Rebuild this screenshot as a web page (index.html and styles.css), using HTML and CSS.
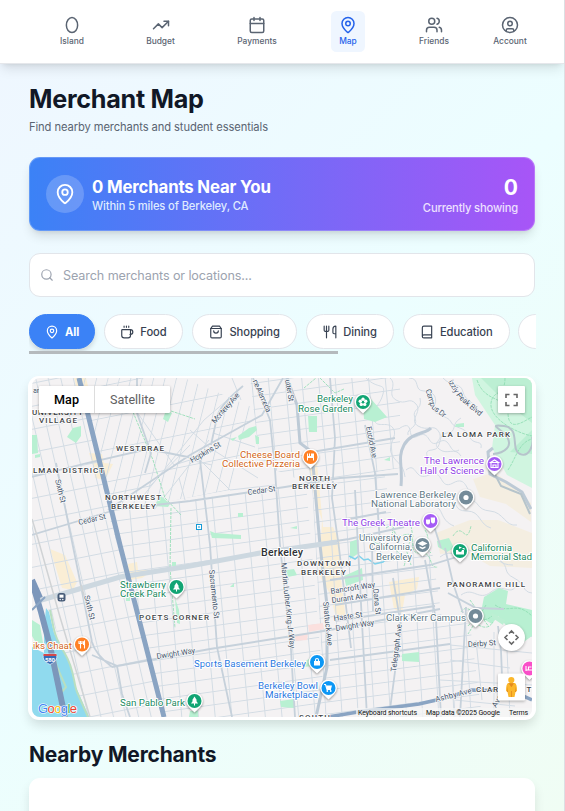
FILE: index.html
```html
<!DOCTYPE html>
<html lang="en">
<head>
<meta charset="utf-8">
<title>Merchant Map</title>
<link rel="stylesheet" href="styles.css">
</head>
<body>
<svg width="0" height="0" class="defs">
  <defs>
    <symbol id="pin" viewBox="0 0 24 24"><path d="M20 10c0 5-5.5 10.2-7.4 11.8a1 1 0 0 1-1.2 0C9.5 20.200 4 15 4 10a8 8 0 0 1 16 0"/><circle cx="12" cy="10" r="3"/></symbol>
  </defs>
</svg>
<div class="page">
  <nav class="nav">
    <a class="item w-island"><svg class="ico" viewBox="0 0 24 24"><path d="M12 2c4 0 7.500 4.500 7.500 10.200S16 22 12 22s-7.500-4.100-7.500-9.800S8 2 12 2z"/></svg><span>Island</span></a>
    <a class="item w-budget"><svg class="ico" viewBox="0 0 24 24"><path d="M22 7l-8.500 8.500-5-5L2 17"/><path d="M16 7h6v6"/></svg><span>Budget</span></a>
    <a class="item w-payments"><svg class="ico" viewBox="0 0 24 24"><path d="M8 2v4M16 2v4M3 10h18"/><rect x="3" y="4" width="18" height="18" rx="2"/></svg><span>Payments</span></a>
    <a class="item w-map active"><svg class="ico"><use href="#pin"/></svg><span>Map</span></a>
    <a class="item w-friends"><svg class="ico" viewBox="0 0 24 24"><path d="M16 21v-2a4 4 0 0 0-4-4H6a4 4 0 0 0-4 4v2"/><circle cx="9" cy="7" r="4"/><path d="M22 21v-2a4 4 0 0 0-3-3.870M16 3.130a4 4 0 0 1 0 7.750"/></svg><span>Friends</span></a>
    <a class="item w-account"><svg class="ico" viewBox="0 0 24 24"><circle cx="12" cy="12" r="10"/><circle cx="12" cy="10" r="3"/><path d="M7 20.600V19a2 2 0 0 1 2-2h6a2 2 0 0 1 2 2v1.600"/></svg><span>Account</span></a>
  </nav>
  <main class="content">
    <h1>Merchant Map</h1>
    <p class="sub">Find nearby merchants and student essentials</p>
    <section class="hero">
      <div class="bubble"><svg class="ico"><use href="#pin"/></svg></div>
      <div class="hero-main"><div class="hero-title">0 Merchants Near You</div><div class="hero-sub">Within 5 miles of Berkeley, CA</div></div>
      <div class="hero-side"><div class="count">0</div><div class="showing">Currently showing</div></div>
    </section>
    <div class="search"><svg class="ico" viewBox="0 0 24 24"><circle cx="11" cy="11" r="8"/><path d="M21 21l-4.300-4.300"/></svg><span>Search merchants or locations...</span></div>
    <div class="chips">
      <div class="chip c-all"><svg class="ico"><use href="#pin"/></svg><span>All</span></div>
      <div class="chip c-food"><svg class="ico" viewBox="0 0 24 24"><path d="M7 2v2M11 2v2M15 2v2M17 8a1 1 0 0 1 1 1v9a4 4 0 0 1-4 4H7a4 4 0 0 1-4-4V9a1 1 0 0 1 1-1h14a4 4 0 1 1 0 8h-1"/></svg><span>Food</span></div>
      <div class="chip c-shop"><svg class="ico" viewBox="0 0 24 24"><path d="M6 2L3 6v14a2 2 0 0 0 2 2h14a2 2 0 0 0 2-2V6l-3-4z"/><path d="M3 6h18M16 10a4 4 0 0 1-8 0"/></svg><span>Shopping</span></div>
      <div class="chip c-dine"><svg class="ico" viewBox="0 0 24 24"><path d="M2 2v7c0 1.100.9 2 2 2h4a2 2 0 0 0 2-2V2M6 2v20M22 15V2a5 5 0 0 0-5 5v6c0 1.100.9 2 2 2zM22 15v7"/></svg><span>Dining</span></div>
      <div class="chip c-edu"><svg class="ico" viewBox="0 0 24 24"><path d="M4 19.500v-15A2.500 2.500 0 0 1 6.500 2H20v20H6.500a2.500 2.500 0 0 1 0-5H20"/></svg><span>Education</span></div>
      <div class="chip c-more"></div>
    </div>
    <div class="thumb"></div>
    <section class="mapcard">
      <svg class="map" viewBox="32 378 500 339">
        <defs>
          <pattern id="gw" width="12" height="22" patternUnits="userSpaceOnUse" patternTransform="matrix(1 -.2 .23 1 36 382)"><path class="mn" d="M0 .5H12M.5 0V22"/></pattern>
          <pattern id="gc" width="16.500" height="13" patternUnits="userSpaceOnUse" patternTransform="matrix(1 -.14 .09 1 202 390)"><path class="mn" d="M0 .5H16.500M.5 0V13"/></pattern>
          <pattern id="gn" width="12" height="34" patternUnits="userSpaceOnUse" patternTransform="matrix(1 -.2 -.25 1 130 380)"><path class="mn" d="M0 .5H12M.5 0V34"/></pattern>
          <pattern id="gs" width="16" height="12" patternUnits="userSpaceOnUse" patternTransform="matrix(1 -.13 .06 1 300 560)"><path class="mn" d="M0 .5H16M.5 0V12"/></pattern>
        </defs>
        <rect class="land" x="32" y="378" width="500" height="339"/>
        <!-- commercial areas -->
        <g class="sand">
          <path d="M74 378h12l2 8H76zM89 453l13 1 2 9 9 1-8 16-10-2-2-13zM50 549l15 6 12 27-4 8-11-2zM128 564l9-2 1 8 16 0-12 8-12 2zM306 452h10l7 75h10l7 15 0 28 6 50-10-3-7-25-10-17 3-55-7-20zM389 582l30-5-2 12-12 6-3 18-8-4z"/>
        </g>
        <path class="tan" d="M473 479l22-7 22 18 14 13v19l-25-18-26-7zM436 533l34-13 28 0 34 13v35l-42-2-24-14-26 2z"/>
        <!-- blocks -->
        <path fill="url(#gw)" d="M32 378h47l85 339H86L56 630 32 570z"/>
        <path fill="url(#gn)" d="M81 378h103l70 30-24 82-122 22z"/>
        <path fill="url(#gc)" d="M108 512l198-29 20 234H165zM250 378h150v90l-90 16-50-20z"/>
        <path fill="url(#gs)" d="M312 483l72-12 10 60 38 20 10 68 28 5 12 93H325z"/>
        <path class="mn" d="M132 405l42 60 16-5 22 5M144 495l60-75 35-30M154 510l55-70M200 460l30 30 45-5M190 430l20 18 48 30M213 433l42 14M105 495l45-9 40-41M232 378l9 22M185 500l-6-22"/>
        <path class="mn" d="M366 378c12 12 20 4 17 16s-10 12-9 24 13 2 19 10-7 17-1 27 11 8 13 22M390 378c8 7-4 16 6 22s13-4 20 4-8 16 2 22 16-3 21 6-8 10 0 17 16-3 22 7M409 378c12 0 4 13 15 13s14 8 10 16 14 8 17 15 14 4 18 14 14 3 12 12M443 378c8 9 18 4 20 14s14 10 17 22M400 428c16-10 5 15 18 8s9 13 21 6 10 14 20 8M406 470c11-9 8 12 23 5s10 16 24 8 13 10 18 7M420 398c3 13-9 10-5 20s-9 10-7 17M461 418c-11 6-3 14-14 15s-3 16-15 17 1 10-6 13M447 498c13 5 6 13 20 13s12 14 24 17M386 494c13-5 11 8 25 3s13 10 23 10 5 13 20 19M470 500c9 0 6 10 20 11s15 16 27 14M440 557c10-8 13 0 19-5s15 0 28 3 12 10 26 10M461 595c13-9 17 7 30-3s19 5 26-7M500 560c10 8 2 12 14 18s8 14 18 15M486 605c10 13 17 6 26 19s13 4 20 13"/>
        <path class="mn" d="M450 627l4 90M476 640l6 60M506 627l4 90M450 660l60 8M440 680l92 5M466 610l65 2M494 632v85M450 645l82 8M455 700l60 6"/>
        <!-- parks -->
        <g class="park">
          <path class="hill" d="M472 378l3 17 20 30-3 23 15 27 25 13V378z"/>
          <path class="deep" d="M481 378l20 20 31 25v-45zM510 452l22-22v24z"/>
          <path d="M363 405l8-6 16 18-12 5-11-3zM73 428l8-2v10l-5 7-9-6zM32 435l5 0 1 18-6 1zM35 455l5-1v3l-5 1zM166 410l6 3-4 9-5-3zM161 496l9 8-2 3-14-1zM238 436l11-8 7-2 1 4-8 7-10 3zM230 439l7-2-4 4zM308 416h9v16h-8zM255 435l4 2v7h-3zM456 424l8-1v4h-9zM384 460l6-3v4zM210 531l5 2 26 2 0 4-29-1zM238 513h5v4h-5zM290 528l7-2v3zM286 570l8-1 3 6-9 2zM344 576l18-8 1 12-17 6zM350 542l8-3 1 14-9 6zM230 587l4-4v4zM484 597l15-9 9 3-2 13 26 6v26l-14 10-8-16-12-14-6 8-12-7zM402 654l17-2v10l-17-1zM294 668l10-6 10-6-1 10zM280 701l14-2v9l-13-1zM190 711h8v6h-9zM172 562h4v4h-4zM126 597h4v4h-4zM175 598l4 12 1 14-3-1z"/>
          <path d="M437 541l12-3 5 10-7 4-9-5zM32 620l8 5 4 24-5-1-7-12z"/>
        </g>
        <path class="deep" d="M492 613l13 7-2 5-12-8z"/>
        <!-- bay -->
        <path class="bay" d="M46 608l3 4 5 21 15 28 6 24 14 32H32v-70l12 6 0-25z"/>
        <path class="shore" d="M50 610c4 18 3 24 14 42s9 30 13 40l11 25M52 650l5 17 9 20-5 6"/>
        <path class="creek" d="M349 556l6 3 4-3 5 4 4-1 7 5 8-2 5-5 5-1"/>
        <path class="clinic" d="M308 625l15-2 1 6-15 3zM295 635l13-2-1 7-13 1z"/>
        <!-- trails -->
        <g class="trail">
          <path d="M133 412l20 48 12 38 16 17M171 508l-1 60 5 60M477 380c8 24 30 15 31 34s16 7 24 3M505 378c0 19-12 11-14 25s22 29 41 33M508 470c8-12 11-28 24-31M386 528c14-9 1 12 18 7s1 19 16 18 7 16 18 14M393 528c-3 13 8 9 4 18s12 8 7 20M411 526l2 11-7 12 5 16M425 530c8 13-5 13 6 23M366 540c8-5 8 8 18 3M453 536c10-16 13 12 18-10M461 612c10-14 15 18 31 4M468 626c6-10 16 10 25-4M470 600l19 27M486 605l-18 29M495 605c15 10 20-5 37 11M171 411l24 8M304 388l12-10M320 378l15 15 9-4"/>
        </g>
        <!-- arterials -->
        <g class="med">
          <path d="M32 477l55-14 61-14 50 10M112 510l78-9 95-14 55-9 58-4M32 535l73-22 10-3M56 463l22 108 14 71q3 12 20 25M108 510l82-55 72-40 21-37M243 386q-23 19-26 31l-6 28M137 378v35l14 40-6 20M200 460l10 85 7 102 15 70M253 378l17 42 5 50 5 75 11 105 4 67M330 378l5 60-3 60 7 50 12 100M365 425l10 48 5 70M312 452l83-14M112 667l98-18 120-19 110-21M303 546l46-7 55-12M330 580l100-15 30-9M335 605l105-17M335 621l100-15M92 655l25 11 5 28 8 23M355 490l12 227M393 578l8 48-12 91M425 560l11 60 5 97M445 548l8 35 10 30M448 593l28 15 28 1M344 520l42-8M372 540l1 71M460 717l6-110M330 660l120-16M441 548l-8-25M498 626l3 25 1 25"/>
        </g>
        <g class="major">
          <path d="M287 378l10 27 3 38 12 9 4 48 4 45 7 60v62l-11 50M401 486c2-20-4-28 3-41s22-11 27-17M493 448l-5 4 2 22 16 8 16 10 9 17"/>
        </g>
        <path class="ave" d="M38 601l82-24 70-11 70-13 77-11"/>
        <path class="rail" d="M32 519l6 20 22 78 18 60 12 40M81 585l9 30"/>
        <path class="ring" d="M493 454c12-1 20-8 14-17s-20-13-3-11 6 24 16 28 14-11 12-17M490 465l11 21 20 8 9 20"/>
        <path class="hwy" d="M79 378l41 167 44 172"/>
        <path class="hwy wide" d="M32 582l9 30 9 34 15 71M32 580l8 18"/>
        <path class="hwy ramp" d="M32 610l13-13"/>
        <path class="hwy ashby" d="M328 717l30-5 61-8 22-5 31-9 40 1 20 9"/>
        <!-- street names -->
        <g class="st">
          <text transform="translate(215 424) rotate(-49)" textLength="38">Monterey Ave</text>
          <text transform="translate(192 463) rotate(-30)" textLength="34">Hopkins St</text>
          <text transform="translate(252.500 381) rotate(66)" textLength="35">ne Alameda</text>
          <text transform="translate(285 380) rotate(80)" textLength="22">utter St</text>
          <text transform="translate(248 495) rotate(-8)" textLength="28">Cedar St</text>
          <text transform="translate(79 525) rotate(-13)" textLength="28">Cedar St</text>
          <text transform="translate(55 480) rotate(76)" textLength="24">Sixth St</text>
          <text transform="translate(84 596) rotate(76)" textLength="25">Sixth St</text>
          <text transform="translate(209 570) rotate(84)" textLength="49">Sacramento St</text>
          <text transform="translate(281 563) rotate(84)" textLength="86">Martin Luther King Jr Way</text>
          <text transform="translate(323 602) rotate(84)" textLength="44">Shattuck Ave</text>
          <text transform="translate(366 427) rotate(79)" textLength="32">Euclid Ave</text>
          <text transform="translate(425.500 390) rotate(73)" textLength="18">Camp</text>
          <text transform="translate(431 408) rotate(38)" textLength="16">us Dr</text>
          <text transform="translate(448 382) rotate(58)" textLength="20">izzly P</text>
          <text transform="translate(459 399) rotate(40)" textLength="27">eak Blvd</text>
          <text transform="translate(331 594) rotate(-9)" textLength="45">Bancroft Way</text>
          <text transform="translate(332 603) rotate(-8)" textLength="36">Durant Ave</text>
          <text transform="translate(334 621) rotate(-8)" textLength="29">Haste St</text>
          <text transform="translate(336 631) rotate(-9)" textLength="39">Dwight Way</text>
          <text transform="translate(157 659) rotate(-9)" textLength="39">Dwight Way</text>
          <text transform="translate(373 589) rotate(84)" textLength="26">Dana St</text>
          <text transform="translate(396 672) rotate(-83)" textLength="48">Telegraph Ave</text>
          <text transform="translate(468 647) rotate(-4)" textLength="28">Derby St</text>
          <text transform="translate(436 702) rotate(-14)" textLength="37">Ashby Ave</text>
          <text transform="translate(496 708) rotate(-60)" textLength="13">Ave</text>
          <text x="33" y="393" textLength="8">an</text>
        </g>
        <!-- districts -->
        <g class="area">
          <text x="32" y="415" textLength="51">UNIVERSITY</text><text x="39" y="423" textLength="38">VILLAGE</text>
          <text x="116" y="451" textLength="48">WESTBRAE</text>
          <text x="33" y="473" textLength="71">LMAN DISTRICT</text>
          <text x="105" y="500" textLength="56">NORTHWEST</text><text x="111" y="508.500" textLength="45">BERKELEY</text>
          <text x="299" y="480.500" textLength="31">NORTH</text><text x="292" y="489" textLength="45">BERKELEY</text>
          <text x="442" y="437" textLength="68">LA LOMA PARK</text>
          <text x="297" y="566" textLength="54">DOWNTOWN</text><text x="301" y="574.500" textLength="45">BERKELEY</text>
          <text x="139" y="619.500" textLength="70">POETS CORNER</text>
          <text x="447" y="586.500" textLength="78">PANORAMIC HILL</text>
          <text x="476" y="691.500" textLength="22">CLAR</text><text x="526.500" y="691.500">T</text>
          <text x="299" y="720" textLength="31">SOUTH</text>
        </g>
        <text class="city" x="261" y="555.500" textLength="42">Berkeley</text>
        <!-- places -->
        <g class="poi green"><text x="317" y="402" textLength="36">Berkeley</text><text x="298" y="411.500" textLength="55">Rose Garden</text><text x="120" y="587.500" textLength="46">Strawberry</text><text x="120" y="597" textLength="46">Creek Park</text><text x="120" y="705.500" textLength="65">San Pablo Park</text><text x="471" y="550.500" textLength="41">California</text><text x="471" y="560" textLength="61">Memorial Stad</text></g>
        <g class="poi orange"><text x="240" y="457.500" textLength="60">Cheese Board</text><text x="222" y="467" textLength="78">Collective Pizzeria</text><text x="33" y="648.500" textLength="39">iks Chaat</text></g>
        <g class="poi purple"><text x="424" y="464" textLength="60">The Lawrence</text><text x="420" y="473.500" textLength="64">Hall of Science</text><text x="342" y="526" textLength="78">The Greek Theatre</text></g>
        <g class="poi slate"><text x="375" y="497.500" textLength="81">Lawrence Berkeley</text><text x="371" y="507" textLength="85">National Laboratory</text><text x="359" y="540.500" textLength="53">University of</text><text x="369" y="550" textLength="43">California,</text><text x="376" y="559.500" textLength="36">Berkeley</text><text x="386" y="620.500" textLength="80">Clark Kerr Campus</text></g>
        <g class="poi blue"><text x="194" y="667" textLength="112">Sports Basement Berkeley</text><text x="258" y="688.500" textLength="60">Berkeley Bowl</text><text x="265" y="698" textLength="53">Marketplace</text></g>
        <!-- markers -->
        <defs><path id="mk" d="M0-8.300a8.300 8.300 0 0 1 5.500 14.500L0 11.500-5.500 6.200A8.300 8.300 0 0 1 0-8.300z"/></defs>
        <g class="mk" transform="translate(363 402)"><use href="#mk"/><circle r="7" fill="#12a574"/><g fill="#fff"><circle cy="-2.800" r="1.700"/><circle cx="2.700" cy="-.8" r="1.700"/><circle cx="1.700" cy="2.400" r="1.700"/><circle cx="-1.700" cy="2.400" r="1.700"/><circle cx="-2.700" cy="-.8" r="1.700"/></g><circle r="1" fill="#12a574"/></g>
        <g class="mk" transform="translate(310.500 457)"><use href="#mk"/><circle r="7" fill="#ff8126"/><path fill="#fff" d="M-3.500-3.500h1V-1h1v-2.500h1V-1H.5v-2.500L3.500-3.500V3.500h-1V1h-5v2.500h-1z"/></g>
        <g class="mk" transform="translate(82 644.500)"><use href="#mk"/><circle r="7" fill="#ff8126"/><path class="wl" d="M-3-3.500v2.500h3v-2.500M-1.500-3.500V4M2.500 4v-7.500l-1 1V0h1"/></g>
        <g class="mk" transform="translate(494.500 464)"><use href="#mk"/><circle r="7" fill="#a55cf5"/><path class="wl" d="M-4-1.500L0-4l4 2.500zM-3.500-1V3.500h7V-1M-1.500 3.500V1h3v2.500"/></g>
        <g class="mk" transform="translate(430.500 521)"><use href="#mk"/><circle r="7" fill="#a55cf5"/><path fill="#fff" d="M-4.500-1.500h4v3a2 2 0 0 1-4 0zM.2-3.500h4.300V0a2 2 0 0 1-4 .8z"/></g>
        <g class="mk" transform="translate(466 497.500)"><use href="#mk"/><circle r="7" fill="#748b99"/><circle r="2.600" fill="#fff"/></g>
        <g class="mk" transform="translate(475.500 616)"><use href="#mk"/><circle r="7" fill="#748b99"/><circle r="2.600" fill="#fff"/></g>
        <g class="mk" transform="translate(422.500 545)"><use href="#mk"/><circle r="7" fill="#748b99"/><path fill="#fff" d="M-5-1.500L0-4l5 2.500L0 1zM-3 1.200L0 2.600l3-1.400v1.600L0 4.300-3 2.800z"/></g>
        <g class="mk" transform="translate(460 551)"><use href="#mk"/><circle r="7" fill="#12a574"/><path fill="#fff" d="M-4 3.500V-1h2a2 2 0 0 0 4 0h2v4.500zM-1-4.500l3 1-3 1.500zM2-3h2.500v2z"/></g>
        <g class="mk" transform="translate(176.500 587)"><use href="#mk"/><circle r="7" fill="#12a574"/><path fill="#fff" d="M0-4.500L2.500-.5H1.500L3.500 2.500h-3V4.500h-1V2.500h-3l2-3h-1z"/></g>
        <g class="mk" transform="translate(194.500 701)"><use href="#mk"/><circle r="7" fill="#12a574"/><path fill="#fff" d="M0-4.500L2.500-.5H1.500L3.500 2.500h-3V4.500h-1V2.500h-3l2-3h-1z"/></g>
        <g class="mk" transform="translate(317 662)"><use href="#mk"/><circle r="7" fill="#0c97f5"/><path fill="#fff" d="M-3-1h6v4.500h-6z"/><path class="wl" d="M-1.500-1v-1a1.500 1.500 0 0 1 3 0v1"/></g>
        <g class="mk" transform="translate(328.500 688)"><use href="#mk"/><circle r="7" fill="#0c97f5"/><path class="wl" d="M-4.500-3.500h1.500L-1.500 1.500H2.500"/><path fill="#fff" d="M-2.500-2.500h6L2.500 1h-4z"/><circle cx="-1.200" cy="3" r=".9" fill="#fff"/><circle cx="2.200" cy="3" r=".9" fill="#fff"/></g>
        <g class="mk" transform="translate(529.500 668.500)"><use href="#mk"/><circle r="7" fill="#f94fc8"/><path class="wl" d="M-3.500-2.500v5M-3.500 1.500h7M-1 1V-1.500h3"/></g>
        <rect class="stop" x="196.500" y="524.500" width="5" height="5"/><path d="M198 527h2" stroke="#159bd7"/>
        <g transform="translate(61.500 597.500)"><rect x="-4" y="-4.500" width="8" height="8.500" rx="2.500" fill="#485c78"/><rect x="-2" y="-2.800" width="4" height="3" fill="#fff"/><circle cx="-1.300" cy="2" r=".7" fill="#fff"/><circle cx="1.300" cy="2" r=".7" fill="#fff"/></g>
        <g transform="translate(50 659)"><path fill="#346bb5" stroke="#fff" stroke-width=".6" d="M-6.500-5H6.500q2 7-6.500 10.500Q-8.500 2-6.500-5z"/><path fill="#d54a4a" d="M-6.500-5H6.500v2H-6.500z"/><text class="shield" x="-5" y="2.800" textLength="10">580</text></g>
        <text class="google" x="38" y="713" textLength="39"><tspan fill="#4285f4">G</tspan><tspan fill="#ea4335">o</tspan><tspan fill="#fbbc05">o</tspan><tspan fill="#4285f4">g</tspan><tspan fill="#34a853">l</tspan><tspan fill="#ea4335">e</tspan></text>
        <path d="M356 708h176v9H356z" fill="#f5f5f5" opacity=".72"/>
        <g class="legal"><text x="358" y="715" textLength="59">Keyboard shortcuts</text><text x="426" y="715" textLength="74">Map data ©2025 Google</text><text x="509" y="715" textLength="19">Terms</text></g>
        <!-- controls -->
        <g class="ctl">
          <rect x="39" y="386" width="131" height="27" rx="1"/>
          <rect x="498" y="386" width="27" height="27" rx="1"/>
          <circle cx="511.500" cy="637.500" r="13.500"/>
          <rect x="498" y="673.500" width="27" height="27" rx="1"/>
        </g>
        <path d="M94.500 386v27" stroke="#ddd"/>
        <text class="tab on" x="54" y="404" textLength="25">Map</text><text class="tab" x="110" y="404" textLength="45">Satellite</text>
        <path class="fs" d="M506 398v-3.500h3.500M513.500 394.500h3.500v3.500M517 402v3.500h-3.500M509.500 405.500H506V402"/>
        <path class="pan" d="M509 633.500l2.500-2.500 2.500 2.500M509 641.500l2.500 2.500 2.500-2.500M507.500 635l-2.500 2.500 2.500 2.500M515.500 635l2.500 2.500-2.500 2.500"/>
        <g fill="#fbb72c"><circle cx="511.300" cy="680" r="3.100"/><path d="M508 683h7q2 1 2 8l-1.500 1-1 5h-6l-1-5-1.500-1q0-7 2-8z"/><path fill="#e58a1f" d="M508.500 683.200h5.500l-2.500 4zM508 686v6h-1zM515 686v6h1zM511 691h.8v6h-.8z"/></g>
      </svg>
    </section>
    <h2>Nearby Merchants</h2>
    <div class="list"></div>
  </main>
</div>
</body>
</html>
```
FILE: styles.css
```css
* { box-sizing: border-box; }
body { margin: 0; height: 811px; overflow: hidden; font-family: Inter, sans-serif; color: #111827; }
.defs { display: block; width: 0; height: 0; }
.page { height: 811px; overflow: hidden; border-right: 1px solid #dcdfe3; background: linear-gradient(135deg, #eff6ff 0%, #ecfeff 50%, #f0fdf4 100%); }
.ico { display: block; flex: none; width: 18px; height: 18px; fill: none; stroke: currentColor; stroke-width: 2; stroke-linecap: round; stroke-linejoin: round; }

.nav { display: flex; height: 64px; padding: 11px 0 0 52px; gap: 46px; background: #fff; border-bottom: 1px solid #e5e7eb; box-shadow: 0 7px 11px -2px rgba(0,0,0,.1), 0 3px 5px -3px rgba(0,0,0,.1); }
.item { display: flex; flex-direction: column; align-items: center; gap: 2px; height: 41px; padding-top: 5px; border-radius: 5.500px; color: #5a6472; font-size: 8.400px; line-height: 11px; font-weight: 500; }
.item.active { color: #2563eb; background: #eff6ff; }
.w-island { width: 40px; } .w-budget { width: 45px; } .w-payments { width: 56px; } .w-map { width: 34px; } .w-friends { width: 46px; } .w-account { width: 50px; margin-left: -18px; }

.content { padding: 19px 29px 0; }
h1 { margin: 0; font-size: 25.200px; line-height: 33px; font-weight: 700; letter-spacing: -.28px; white-space: nowrap; }
.sub { margin: 3px 0 0; font-size: 11.200px; line-height: 16px; letter-spacing: -.1px; color: #5a6472; }

.hero { display: flex; align-items: center; width: 506px; height: 74px; margin-top: 22px; padding: 0 16px; border: 1px solid rgba(255,255,255,.2); border-radius: 11px; color: #fff; background: linear-gradient(90deg, #3b82f6, #a855f7) border-box; box-shadow: 0 7px 11px -2px rgba(0,0,0,.12), 0 3px 5px -3px rgba(0,0,0,.1); }
.bubble { display: flex; align-items: center; justify-content: center; width: 38px; height: 38px; border-radius: 50%; background: rgba(255,255,255,.2); }
.bubble .ico { width: 22px; height: 22px; }
.hero-main { flex: 1; margin: 4px 0 0 8px; }
.hero-title { font-size: 16.800px; line-height: 20px; font-weight: 700; letter-spacing: -.16px; }
.hero-sub { font-size: 11.200px; line-height: 18px; font-weight: 500; letter-spacing: -.14px; color: #dfeaff; }
.hero-side { padding-top: 3px; text-align: right; }
.count { font-size: 21px; line-height: 24px; font-weight: 700; }
.showing { font-size: 11.200px; line-height: 16px; font-weight: 500; letter-spacing: -.17px; color: #ede0ff; }

.search { display: flex; align-items: center; width: 506px; height: 44px; margin-top: 22px; padding-left: 10px; gap: 9px; background: #fff; border: 1px solid #e2e5ea; border-radius: 11px; color: #9ca3af; font-size: 12.600px; letter-spacing: -.1px; }
.search .ico { width: 14px; height: 14px; }

.chips { display: flex; gap: 8.700px; width: 507px; height: 37px; margin-top: 17px; overflow: hidden; }
.chip { display: flex; flex: none; align-items: center; justify-content: center; gap: 6px; height: 35px; border: 1px solid #e2e5ea; border-radius: 18px; background: #fff; color: #374151; font-size: 11.200px; font-weight: 500; letter-spacing: -.08px; }
.chip .ico { width: 14px; height: 14px; }
.c-all { width: 66px; color: #fff; background: #3b82f6; border-color: #3b82f6; font-weight: 700; box-shadow: 0 3px 5px rgba(0,0,0,.15); }
.c-food { width: 79.500px; } .c-shop { width: 105.500px; } .c-dine { width: 88px; } .c-edu { width: 107px; } .c-more { width: 80px; }
.thumb { width: 309px; height: 3px; background: #b5babd; }

.mapcard { width: 508px; height: 344px; margin: 22px 0 0 -1px; padding: 2px 4px 3px; background: #fff; border-radius: 11px; box-shadow: 0 6px 11px -1px rgba(0,0,0,.13); }
.map { display: block; width: 500px; height: 339px; border-radius: 8px; overflow: hidden; font-family: Roboto, sans-serif; }
h2 { margin: 20px 0 0; font-size: 21px; line-height: 30px; font-weight: 700; letter-spacing: -.19px; }
.list { width: 506px; height: 90px; margin-top: 8px; background: #fff; border-radius: 11px; box-shadow: 0 7px 11px rgba(0,0,0,.1); }

.land { fill: #f4f2f3; }
.sand { fill: #faeed5; }
.tan { fill: #f4eee1; }
.park { fill: #b8f0d2; }
.hill { fill: #d0f5e0; }
.deep { fill: #bcefd3; }
.clinic { fill: #fbe0de; }
.bay { fill: #90daee; }
.shore { fill: none; stroke: #b9dfc0; stroke-width: 2; }
.creek { fill: none; stroke: #81d1eb; stroke-width: 1.500; }
.mn { fill: none; stroke: #d3dce4; stroke-width: 1; }
.med { fill: none; stroke: #c6d1db; stroke-width: 1.800; }
.major { fill: none; stroke: #bdcad6; stroke-width: 3; }
.ave { fill: none; stroke: #cdd8e0; stroke-width: 5; }
.rail { fill: none; stroke: #d0d3d5; stroke-width: 1.500; }
.ring { fill: none; stroke: #b6c4cb; stroke-width: 2; }
.trail { fill: none; stroke: #8bdcb0; stroke-width: .8; stroke-dasharray: 3 1; }
.hwy { fill: none; stroke: #8aa4c3; stroke-width: 5; }
.hwy.wide { stroke: #7c97bb; stroke-width: 6; }
.hwy.ramp { stroke-width: 2; }
.hwy.ashby { stroke-width: 3.500; }
.map text { paint-order: stroke; stroke-linejoin: round; }
.st text { font-size: 7.800px; fill: #46566c; stroke: #f8f8f9; stroke-width: 1.500px; }
.area text { font-size: 8px; font-weight: 500; fill: #414346; stroke: #fff; stroke-width: 1.500px; }
.city { font-size: 10.800px; font-weight: 500; fill: #303236; stroke: #fff; stroke-width: 2px; }
.poi text { font-size: 9.900px; stroke: #fff; stroke-width: 2px; }
.green { fill: #178a60; } .orange { fill: #d26518; } .purple { fill: #9040e5; } .slate { fill: #607783; } .blue { fill: #2878df; }
.mk use { fill: #fff; filter: drop-shadow(0 1px 1px rgba(0,0,0,.4)); }
.wl { fill: none; stroke: #fff; stroke-width: 1.100; }
.stop { fill: #fff; stroke: #159bd7; stroke-width: 1; }
.map .shield { font-size: 6px; font-weight: 700; fill: #fff; }
.map .google { font-family: "Liberation Sans", sans-serif; font-size: 13px; stroke: #fff; stroke-width: 1.200px; }
.legal text { font-size: 7px; fill: #111; }
.ctl { fill: #fff; filter: drop-shadow(0 1px 1.500px rgba(0,0,0,.3)); }
.tab { font-size: 12.600px; fill: #606060; }
.tab.on { font-weight: 500; fill: #000; }
.fs, .pan { fill: none; stroke: #666; stroke-width: 1.600; }
```
